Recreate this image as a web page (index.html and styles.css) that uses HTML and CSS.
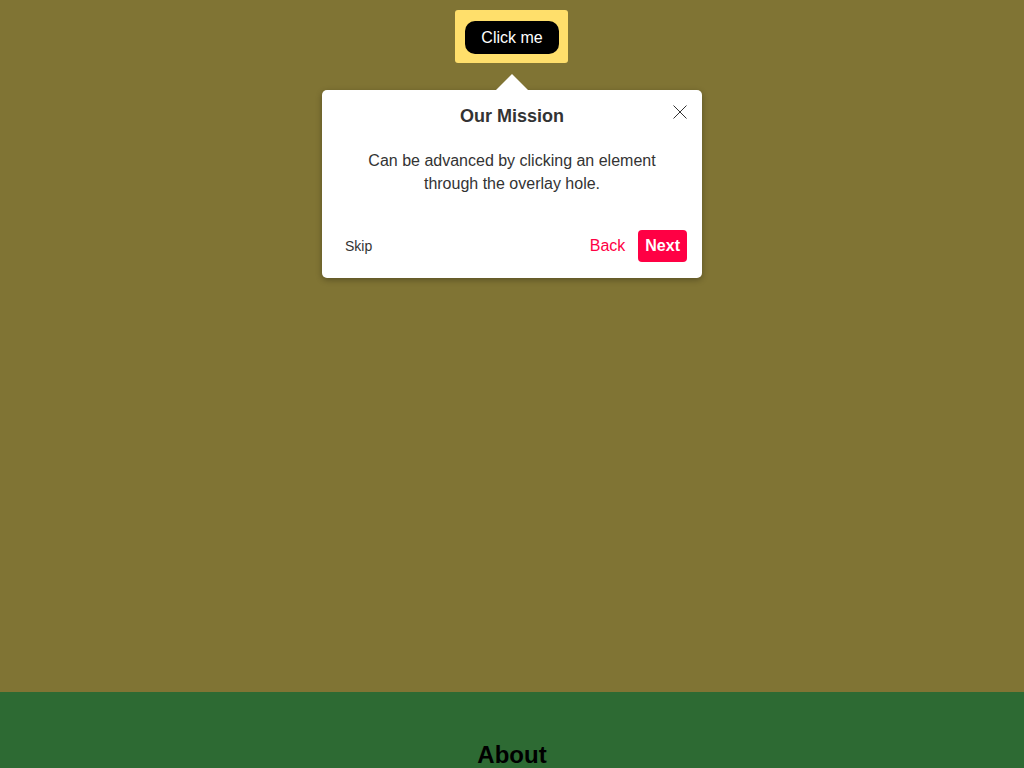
FILE: index.html
```html
<!DOCTYPE html>
<html lang="en">
<head>
<meta charset="utf-8">
<title>Tour</title>
<link rel="stylesheet" href="styles.css">
</head>
<body>
<section class="hero">
  <div class="spotlight">
    <button class="click-btn">Click me</button>
  </div>
  <div class="tooltip">
    <span class="arrow"></span>
    <button class="close" aria-label="Close">
      <svg width="14" height="14" viewBox="0 0 14 14"><path d="M0.5 0.5 L13.5 13.5 M13.5 0.5 L0.5 13.5" stroke="#333" stroke-width="1" fill="none"/></svg>
    </button>
    <h4 class="title">Our Mission</h4>
    <div class="content">Can be advanced by clicking an element<br>through the overlay hole.</div>
    <div class="footer">
      <button class="skip">Skip</button>
      <div class="nav">
        <button class="back">Back</button>
        <button class="next">Next</button>
      </div>
    </div>
  </div>
</section>
<section class="about">
  <h2>About</h2>
</section>
</body>
</html>
```
FILE: styles.css
```css
html, body {
  margin: 0;
  padding: 0;
  font-family: "Liberation Sans", Arial, sans-serif;
  overflow: hidden;
}
.hero {
  height: 692px;
  background: #807434;
  display: flex;
  flex-direction: column;
  align-items: center;
  padding-top: 10px;
  box-sizing: border-box;
}
.spotlight {
  background: #ffdf6b;
  border-radius: 3px;
  padding: 11px 9px 9px 10px;
  margin-left: -1px;
  display: flex;
}
.click-btn {
  background: #000;
  color: #fff;
  border: none;
  border-radius: 10px;
  width: 94px;
  height: 33px;
  font-family: inherit;
  font-size: 16px;
  padding: 0;
}
.tooltip {
  position: relative;
  margin-top: 27px;
  width: 380px;
  box-sizing: border-box;
  background: #fff;
  border-radius: 5px;
  padding: 15px;
  color: #333;
  text-align: center;
  box-shadow: 0 2px 6px rgba(0,0,0,0.3);
}
.arrow {
  position: absolute;
  top: -16px;
  left: 174px;
  width: 0;
  height: 0;
  border-left: 16px solid transparent;
  border-right: 16px solid transparent;
  border-bottom: 16px solid #fff;
}
.close {
  position: absolute;
  top: 0;
  right: 0;
  padding: 15px;
  background: none;
  border: none;
  line-height: 0;
}
.title {
  margin: 0;
  font-size: 18px;
  font-weight: bold;
  line-height: 22px;
}
.content {
  padding: 22px 10px 20px;
  font-size: 16px;
  line-height: 23px;
}
.footer {
  margin-top: 14px;
  display: flex;
  justify-content: space-between;
  align-items: center;
}
.nav {
  display: flex;
  align-items: center;
}
.skip {
  background: none;
  border: none;
  color: #333;
  font-family: inherit;
  font-size: 14px;
  padding: 8px;
}
.back {
  background: none;
  border: none;
  color: #ff0044;
  font-family: inherit;
  font-size: 16px;
  padding: 8px;
  margin-right: 5px;
}
.next {
  background: #ff0044;
  border: none;
  border-radius: 4px;
  color: #fff;
  font-family: inherit;
  font-size: 16px;
  font-weight: bold;
  padding: 8px 7px;
  height: 32px;
  line-height: 16px;
}
.about {
  height: 200px;
  background: #2d6a33;
  padding-top: 49px;
  box-sizing: border-box;
  text-align: center;
}
.about h2 {
  margin: 0;
  font-size: 24px;
  line-height: 28px;
  color: #000;
}
```
